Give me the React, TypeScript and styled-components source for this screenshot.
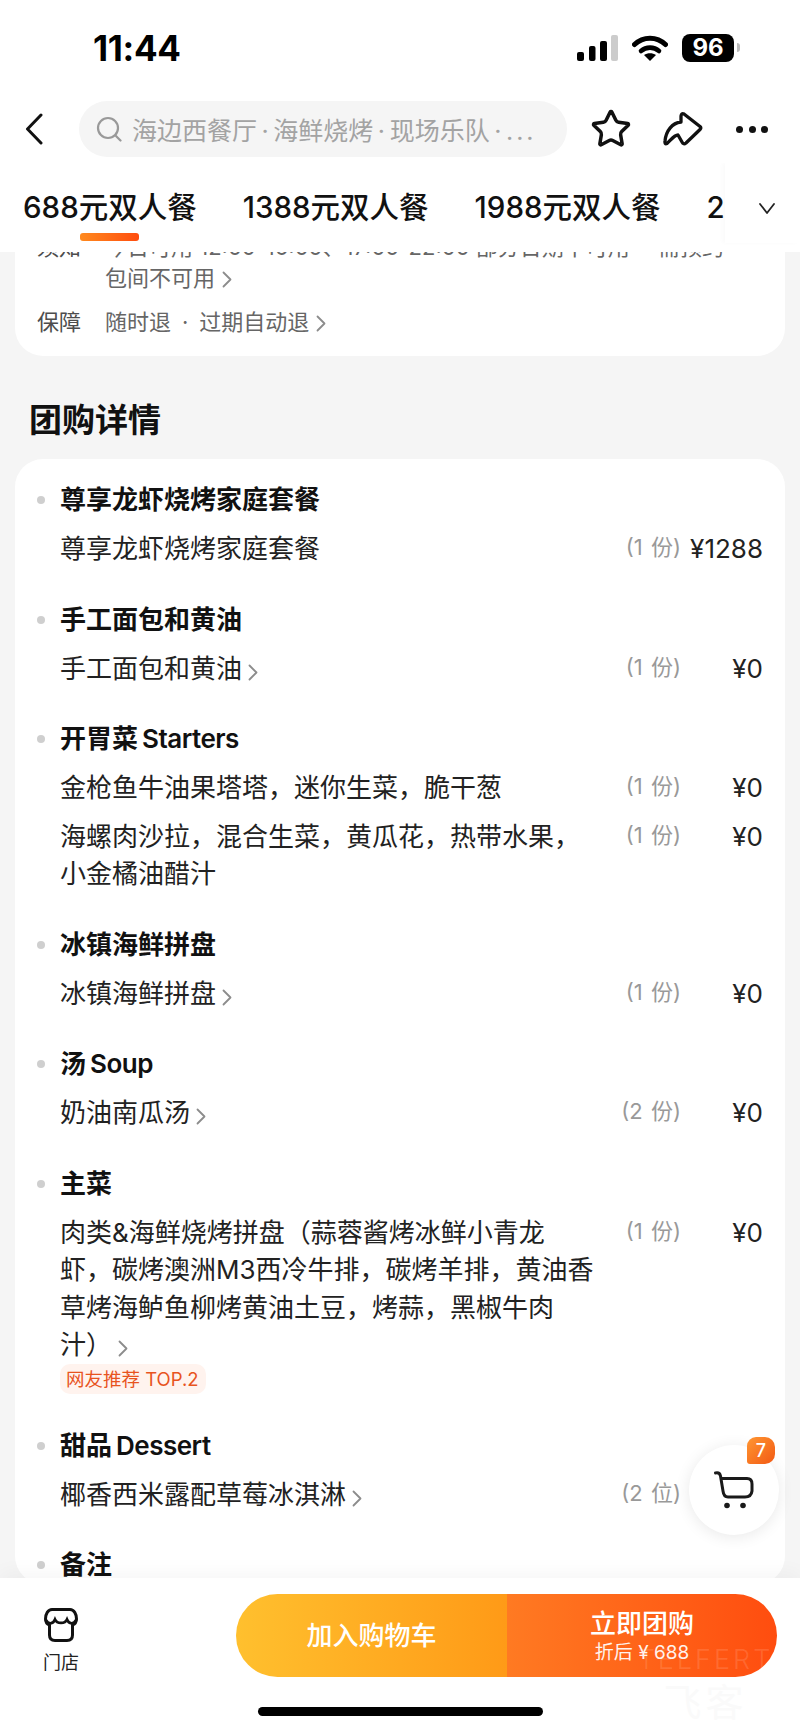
import styled, { createGlobalStyle } from 'styled-components'
import { Star } from 'lucide-react'

const FONT = `Inter, "Noto Sans CJK SC", "Noto Sans", sans-serif`

type Row = { name: React.ReactNode; arrow?: boolean; qty: string; price: string; tag?: string }
type Group = { title: string; latin?: string; rows: Row[] }

const GROUPS: Group[] = [
  { title: '尊享龙虾烧烤家庭套餐', rows: [{ name: '尊享龙虾烧烤家庭套餐', qty: '(1 份)', price: '¥1288' }] },
  { title: '手工面包和黄油', rows: [{ name: '手工面包和黄油', arrow: true, qty: '(1 份)', price: '¥0' }] },
  {
    title: '开胃菜',
    latin: 'Starters',
    rows: [
      { name: '金枪鱼牛油果塔塔，迷你生菜，脆干葱', qty: '(1 份)', price: '¥0' },
      {
        name: (
          <>
            海螺肉沙拉，混合生菜，黄瓜花，热带水果，
            <br />
            小金橘油醋汁
          </>
        ),
        qty: '(1 份)',
        price: '¥0',
      },
    ],
  },
  { title: '冰镇海鲜拼盘', rows: [{ name: '冰镇海鲜拼盘', arrow: true, qty: '(1 份)', price: '¥0' }] },
  { title: '汤', latin: 'Soup', rows: [{ name: '奶油南瓜汤', arrow: true, qty: '(2 份)', price: '¥0' }] },
  {
    title: '主菜',
    rows: [
      {
        name: (
          <>
            肉类&海鲜烧烤拼盘（蒜蓉酱烤冰鲜小青龙
            <br />
            虾，碳烤澳洲M3西冷牛排，碳烤羊排，黄油香
            <br />
            草烤海鲈鱼柳烤黄油土豆，烤蒜，黑椒牛肉
            <br />
            汁）
          </>
        ),
        arrow: true,
        qty: '(1 份)',
        price: '¥0',
        tag: '网友推荐 TOP.2',
      },
    ],
  },
  { title: '甜品', latin: 'Dessert', rows: [{ name: '椰香西米露配草莓冰淇淋', arrow: true, qty: '(2 位)', price: '' }] },
  { title: '备注', rows: [] },
]

/*---> Component <---*/
export default function App() {
  return (
    <Page>
      <GlobalStyle />
      <Header>
        <StatusBar>
          <Time>11:44</Time>
          <StatusIcons>
            <svg width="41" height="26" viewBox="0 0 41 26">
              <rect x="0" y="17" width="7" height="9" rx="2" fill="#000" />
              <rect x="12" y="11" width="6.5" height="15" rx="2" fill="#000" />
              <rect x="23" y="6" width="7" height="20" rx="2" fill="#000" />
              <rect x="34" y="0" width="7" height="26" rx="2" fill="#ccc" />
            </svg>
            <svg width="36" height="26" viewBox="0 0 36 26">
              <path d="M2.5 9.5 C11 1 25 1 33.5 9.5" fill="none" stroke="#000" strokeWidth="5" strokeLinecap="round" />
              <path d="M9 16 C14 11.5 22 11.5 27 16" fill="none" stroke="#000" strokeWidth="4.6" strokeLinecap="round" />
              <path d="M12 20 C15.5 17.5 20.5 17.5 24 20 L18 26 Z" fill="#000" />
            </svg>
            <Battery>
              <BatteryBody>96</BatteryBody>
              <BatteryNub />
            </Battery>
          </StatusIcons>
        </StatusBar>

        <NavBar>
          <BackIcon width="18" height="32" viewBox="0 0 18 32">
            <path d="M16 2 L2.5 16 L16 30" fill="none" stroke="#111" strokeWidth="3" strokeLinecap="round" strokeLinejoin="round" />
          </BackIcon>
          <SearchBox>
            <svg width="26" height="26" viewBox="0 0 26 26">
              <circle cx="12" cy="12" r="10" fill="none" stroke="#999" strokeWidth="2.2" />
              <path d="M19.5 19.5 L24.5 24.5" stroke="#999" strokeWidth="2.2" strokeLinecap="round" />
            </svg>
            <SearchText>
              海边西餐厅{'\u2009·\u2009'}海鲜烧烤{'\u2009·\u2009'}现场乐队{'\u2009·\u2009'}
              <SearchEllipsis>...</SearchEllipsis>
            </SearchText>
          </SearchBox>
          <StarButton>
            <Star size={42} strokeWidth={2} color="#111" />
          </StarButton>
          <ShareIcon width="40" height="36" viewBox="0 0 40 36">
            <path
              d="M21 3 L37 15.5 Q38.5 17 37 18.5 L23 32 Q20.5 34 19 31 L15 24 C11 24 7 30 4 32.5 Q1.5 33.5 2 30 C3 20 9 12 18 11 L18 5 Q18.5 1.5 21 3 Z"
              fill="none"
              stroke="#111"
              strokeWidth="3.3"
              strokeLinejoin="round"
            />
          </ShareIcon>
          <Dots>
            <Dot />
            <Dot />
            <Dot />
          </Dots>
        </NavBar>

        <Tabs>
          <Tab $active>688元双人餐</Tab>
          <Tab>1388元双人餐</Tab>
          <Tab>1988元双人餐</Tab>
          <Tab>2188元双人餐</Tab>
          <TabsFade>
            <svg width="16" height="11" viewBox="0 0 16 11">
              <path d="M1 1 L8 10 L15 1" fill="none" stroke="#222" strokeWidth="1.8" strokeLinecap="round" strokeLinejoin="round" />
            </svg>
          </TabsFade>
        </Tabs>
      </Header>

      <Content>
        <NoticeCard>
          <NoticeRow>
            <NoticeLabel>须知</NoticeLabel>
            <NoticeValue>
              今日可用 12:00-16:00、17:00-22:00 部分日期不可用{'\u2002·\u2002'}需预约
              <br />
              包间不可用
              <Arrow />
            </NoticeValue>
          </NoticeRow>
          <NoticeRow>
            <NoticeLabel>保障</NoticeLabel>
            <NoticeValue>
              随时退{'\u2002·\u2002'}过期自动退
              <Arrow />
            </NoticeValue>
          </NoticeRow>
        </NoticeCard>

        <SectionTitle>团购详情</SectionTitle>

        <DetailCard>
          {GROUPS.map((group) => (
            <GroupBlock key={group.title}>
              <GroupTitle>
                <Bullet />
                <span>
                  {group.title}
                  {group.latin && <TitleLatin>{group.latin}</TitleLatin>}
                </span>
              </GroupTitle>
              {group.rows.map((row, i) => (
                <ItemRow key={i}>
                  <ItemName>
                    {row.name}
                    {row.arrow && <ItemArrow />}
                    {row.tag && <Tag>{row.tag}</Tag>}
                  </ItemName>
                  <Qty>{row.qty}</Qty>
                  <Price>{row.price}</Price>
                </ItemRow>
              ))}
            </GroupBlock>
          ))}
        </DetailCard>
      </Content>

      <CartFloat>
        <svg width="40" height="38" viewBox="0 0 40 38">
          <path
            d="M1.5 2 C4 1.5 6 2.5 6.5 5 L9 20 C9.5 24 11.5 26 14 26 H31 C35 26 37.5 24 38 20 L38 13 C38 9.5 36 7.5 33 7.5 H7.5"
            fill="none"
            stroke="#1a1a1a"
            strokeWidth="3"
            strokeLinecap="round"
          />
          <circle cx="13" cy="34.5" r="2.8" fill="#1a1a1a" />
          <circle cx="29" cy="34.5" r="2.8" fill="#1a1a1a" />
        </svg>
        <CartBadge>7</CartBadge>
      </CartFloat>

      <BottomBar>
        <ActionRow>
          <StoreLink>
            <svg width="34" height="34" viewBox="0 0 34 34">
              <path
                d="M8 1.5 H26 C30 1.5 32.5 6 32.5 11 C32.5 14 31 16 28.5 17 V27 C28.5 30.5 26.5 32.5 23 32.5 H11 C7.5 32.5 5.5 30.5 5.5 27 V17 C3 16 1.5 14 1.5 11 C1.5 6 4 1.5 8 1.5 Z"
                fill="none"
                stroke="#111"
                strokeWidth="3"
                strokeLinejoin="round"
              />
              <path d="M2 12 C4 16.5 9 16.5 11 11.5 C13 16 21 16 23 11.5 C25 16.5 30 16.5 32 12" fill="none" stroke="#111" strokeWidth="2.8" />
            </svg>
            <StoreLabel>门店</StoreLabel>
          </StoreLink>
          <BuyGroup>
            <CartButton>加入购物车</CartButton>
            <BuyButton>
              <BuyTitle>立即团购</BuyTitle>
              <BuySub>折后 ¥ 688</BuySub>
            </BuyButton>
          </BuyGroup>
        </ActionRow>
        <HomeIndicator />
        <Watermark>
          <WatermarkLatin>TELFERT</WatermarkLatin>
          <WatermarkCjk>飞客</WatermarkCjk>
        </Watermark>
      </BottomBar>
    </Page>
  )
}

function Arrow({ className }: { className?: string }) {
  return (
    <ArrowSvg className={className} width="10" height="17" viewBox="0 0 10 17">
      <path d="M1.5 1.5 L8.5 8.5 L1.5 15.5" fill="none" stroke="#8c8c8c" strokeWidth="1.8" strokeLinecap="round" strokeLinejoin="round" />
    </ArrowSvg>
  )
}

/*---> Styles <---*/
const GlobalStyle = createGlobalStyle`
  html, body {
    margin: 0;
    padding: 0;
    background: #f5f5f5;
  }
`

const Page = styled.div`
  position: relative;
  display: flex;
  flex-direction: column;
  width: 800px;
  height: 1731px;
  overflow: hidden;
  background: #f5f5f5;
  font-family: ${FONT};
  color: #111;
`

const Header = styled.header`
  position: relative;
  z-index: 2;
  flex: none;
  background: #fff;
`

const StatusBar = styled.div`
  display: flex;
  align-items: center;
  justify-content: space-between;
  height: 95px;
  padding: 0 60px 0 93px;
  box-sizing: border-box;
`

const Time = styled.div`
  font-size: 35px;
  font-weight: 700;
  letter-spacing: -0.3px;
  color: #000;
`

const StatusIcons = styled.div`
  display: flex;
  align-items: center;
  gap: 14px;
`

const Battery = styled.div`
  display: flex;
  align-items: center;
  gap: 3px;
`

const BatteryBody = styled.div`
  width: 52px;
  height: 28px;
  border-radius: 8px;
  background: #000;
  color: #fff;
  font-size: 24px;
  font-weight: 700;
  line-height: 28px;
  text-align: center;
`

const BatteryNub = styled.div`
  width: 3px;
  height: 9px;
  border-radius: 0 3px 3px 0;
  background: #bbb;
`

const NavBar = styled.div`
  display: flex;
  align-items: center;
  height: 68px;
  padding-left: 25px;
`

const BackIcon = styled.svg`
  flex: none;
  margin-right: 36px;
`

const SearchBox = styled.div`
  flex: none;
  display: flex;
  align-items: center;
  gap: 10px;
  width: 488px;
  height: 56px;
  padding-left: 17px;
  box-sizing: border-box;
  border-radius: 28px;
  background: #f5f5f5;
`

const SearchText = styled.div`
  font-size: 25px;
  color: #a3a3a3;
  white-space: nowrap;
`

const SearchEllipsis = styled.span`
  letter-spacing: 3px;
`

const StarButton = styled.div`
  display: flex;
  margin-left: 23px;
`

const ShareIcon = styled.svg`
  flex: none;
  margin-left: 31px;
`

const Dots = styled.div`
  display: flex;
  gap: 5.5px;
  margin-left: 33px;
`

const Dot = styled.span`
  width: 7px;
  height: 7px;
  border-radius: 50%;
  background: #111;
`

const Tabs = styled.div`
  position: relative;
  display: flex;
  gap: 46px;
  height: 89px;
  padding: 26px 0 0 23px;
  box-sizing: border-box;
  overflow: hidden;
  white-space: nowrap;
`

const Tab = styled.div<{ $active?: boolean }>`
  position: relative;
  flex: none;
  height: 36px;
  font-size: 29.5px;
  font-weight: 500;
  line-height: 36px;
  color: #111;

  ${(p) =>
    p.$active &&
    `
    &::after {
      content: '';
      position: absolute;
      left: 57px;
      top: 44px;
      width: 59px;
      height: 8px;
      border-radius: 3px;
      background: linear-gradient(90deg, #ff8a1e, #ff4d0f);
    }
  `}
`

const TabsFade = styled.div`
  position: absolute;
  top: 0;
  right: 0;
  display: flex;
  align-items: center;
  justify-content: flex-end;
  width: 75px;
  height: 80px;
  padding: 11px 25px 0 0;
  box-sizing: border-box;
  background: #fff;
  box-shadow: -3px 0 4px rgba(0, 0, 0, 0.02);
`

const Content = styled.main`
  flex: 1;
  min-height: 0;
  overflow: hidden;
`

const NoticeCard = styled.section`
  display: flex;
  flex-direction: column;
  gap: 13.5px;
  margin: -20.5px 15px 0;
  padding: 0 0 18px 22px;
  border-radius: 0 0 28px 28px;
  background: #fff;
`

const NoticeRow = styled.div`
  display: flex;
  font-size: 22px;
  line-height: 31px;
`

const NoticeLabel = styled.div`
  flex: none;
  width: 68px;
  color: #4d4d4d;
`

const NoticeValue = styled.div`
  color: #666;
  white-space: nowrap;
`

const ArrowSvg = styled.svg`
  margin-left: 7px;
  vertical-align: -2px;
`

const SectionTitle = styled.h2`
  height: 46px;
  margin: 41px 0 16px 29px;
  font-size: 33px;
  font-weight: 600;
  line-height: 46px;
  color: #111;
`

const DetailCard = styled.section`
  margin: 0 15px;
  padding: 22px 22px 0 22px;
  border-radius: 28px;
  background: #fff;
`

const GroupBlock = styled.div`
  margin-bottom: 33px;
`

const GroupTitle = styled.div`
  display: flex;
  align-items: center;
  gap: 15px;
  font-size: 26px;
  font-weight: 600;
  line-height: 38px;
`

const TitleLatin = styled.span`
  margin-left: 4px;
  letter-spacing: -0.5px;
`

const Bullet = styled.span`
  flex: none;
  width: 8px;
  height: 8px;
  border-radius: 50%;
  background: #cfcfcf;
`

const ItemRow = styled.div`
  display: flex;
  align-items: flex-start;
  margin-top: 11px;
  padding-left: 23px;
  font-size: 26px;
  line-height: 37.5px;
  color: #222;
`

const ItemName = styled.div`
  flex: 1;
  min-width: 0;
`

const ItemArrow = styled(Arrow)`
  margin-left: 6px;
  vertical-align: -3px;
`

const Tag = styled.div`
  width: fit-content;
  height: 30px;
  padding: 0 7px 0 6px;
  border-radius: 10px;
  background: #fff3ee;
  font-size: 18.5px;
  line-height: 30px;
  color: #e8541e;
`

const Qty = styled.div`
  flex: none;
  font-size: 22px;
  line-height: 34px;
  color: #999;
  word-spacing: 2px;
`

const Price = styled.div`
  flex: none;
  width: 82px;
  text-align: right;
  color: #222;
`

const CartFloat = styled.div`
  position: absolute;
  right: 21px;
  bottom: 196px;
  z-index: 1;
  display: flex;
  align-items: center;
  justify-content: center;
  width: 90px;
  height: 90px;
  border-radius: 50%;
  background: #fff;
  box-shadow: 0 2px 16px rgba(0, 0, 0, 0.09);
`

const CartBadge = styled.div`
  position: absolute;
  top: -8px;
  right: 4px;
  width: 28px;
  height: 27px;
  border-radius: 9px 10px 10px 3px;
  background: linear-gradient(135deg, #ff9632, #f25a14);
  font-size: 18px;
  font-weight: 500;
  line-height: 27px;
  text-align: center;
  color: #fff;
`

const BottomBar = styled.footer`
  position: relative;
  z-index: 2;
  flex: none;
  height: 153px;
  background: #fff;
  box-shadow: 0 -6px 18px rgba(0, 0, 0, 0.035);
`

const ActionRow = styled.div`
  display: flex;
  padding-top: 16px;
`

const StoreLink = styled.div`
  flex: none;
  display: flex;
  flex-direction: column;
  align-items: center;
  width: 122px;
  margin-right: 114px;
  padding-top: 14px;
`

const StoreLabel = styled.div`
  margin-top: 8px;
  font-size: 18px;
  line-height: 26px;
  color: #222;
`

const BuyGroup = styled.div`
  display: flex;
  width: 541px;
  height: 83px;
  border-radius: 42px;
  overflow: hidden;
`

const CartButton = styled.div`
  flex: none;
  width: 271px;
  background: linear-gradient(90deg, #ffc02e, #ff9a17);
  font-size: 26px;
  font-weight: 500;
  line-height: 83px;
  text-align: center;
  color: #fff;
`

const BuyButton = styled.div`
  flex: 1;
  display: flex;
  flex-direction: column;
  align-items: center;
  padding-top: 13px;
  box-sizing: border-box;
  background: linear-gradient(90deg, #ff7a22, #ff4d0f);
  color: #fff;
`

const BuyTitle = styled.div`
  font-size: 26px;
  font-weight: 500;
  line-height: 34px;
`

const BuySub = styled.div`
  font-size: 19px;
  line-height: 24px;
  opacity: 0.92;
`

const HomeIndicator = styled.div`
  width: 285px;
  height: 9px;
  margin: 30px 0 0 258px;
  border-radius: 5px;
  background: #000;
`

const Watermark = styled.div`
  position: absolute;
  left: 628px;
  top: 66px;
  display: flex;
  flex-direction: column;
  align-items: center;
  width: 155px;
  pointer-events: none;
`

const WatermarkLatin = styled.div`
  font-size: 27px;
  font-weight: 300;
  line-height: 32px;
  letter-spacing: 3px;
  color: rgba(255, 255, 255, 0.13);
`

const WatermarkCjk = styled.div`
  margin-top: 4px;
  font-size: 38px;
  line-height: 44px;
  letter-spacing: 4px;
  color: #fafafa;
`
